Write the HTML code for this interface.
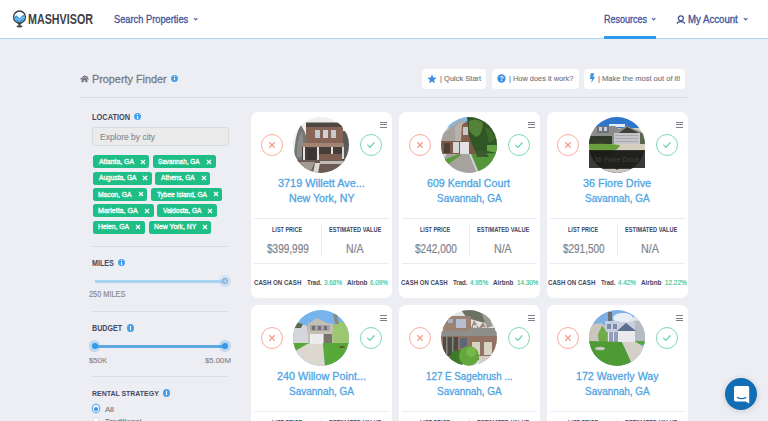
<!DOCTYPE html>
<html><head><meta charset="utf-8">
<style>
*{margin:0;padding:0;box-sizing:border-box}
html,body{width:768px;height:421px;overflow:hidden}
body{background:#edeef3;font-family:"Liberation Sans",sans-serif;position:relative}
.a{position:absolute;white-space:nowrap;line-height:1;transform-origin:0 0;-webkit-text-stroke:0.3px currentColor}
#hdr{position:absolute;left:0;top:0;width:768px;height:39px;background:#fff;border-bottom:1px solid #a9d6f7}
.chev{position:absolute;width:3.3px;height:3.3px;border-right:1.4px solid #46549a;border-bottom:1.4px solid #46549a;transform:rotate(45deg)}
.info{position:absolute;width:7.2px;height:7.2px;border-radius:50%;background:#4aa2e8;margin-top:-0.3px}
.info:after{content:"";position:absolute;left:3px;top:2.8px;width:1.2px;height:2.7px;background:#fff}
.info:before{content:"";position:absolute;left:3px;top:1.2px;width:1.2px;height:1px;background:#fff}
.div{position:absolute;height:1px;background:#dcdde2}
.btn{position:absolute;top:68.5px;height:20px;background:#fff;border-radius:4px}
.tag{position:absolute;height:13px;background:#1fbe87;border-radius:2.5px}
.tag svg{position:absolute;right:3.6px;top:3.6px}
.card{position:absolute;width:141px;height:186.5px;background:#fff;border-radius:7px;overflow:hidden}
.photo{position:absolute;left:42px;top:5px;width:56px;height:56px;border-radius:50%;overflow:hidden}
.xc{position:absolute;left:10.2px;top:22.3px;width:22px;height:22px;border-radius:50%;border:1px solid #f8ae9f}
.ck{position:absolute;left:109px;top:22.3px;width:22px;height:22px;border-radius:50%;border:1px solid #7dd9b8}
.ham{position:absolute;left:129px;top:10px;width:7px;height:6.5px;border-top:1px solid #7b7f88;border-bottom:1px solid #7b7f88}
.ham:after{content:"";position:absolute;left:0;top:1.8px;width:7px;height:1px;background:#7b7f88}
.cd{position:absolute;left:3px;width:135px;height:1px;background:#eaebee}
.vd{position:absolute;left:69.6px;top:113px;width:1px;height:31px;background:#eaebee}
</style></head><body>
<div id="hdr">
  <svg class="a" style="left:12px;top:9px" width="16" height="20" viewBox="0 0 16 20">
    <defs><clipPath id="lc"><circle cx="7.5" cy="8" r="5.2"/></clipPath></defs>
    <path d="M4.5 13 L7.5 17 L10.5 13 Z" fill="#3d4045"/>
    <ellipse cx="7.5" cy="17.4" rx="3" ry="1.1" fill="#3d4045"/>
    <circle cx="7.5" cy="8" r="5.9" fill="#fff" stroke="#3d4045" stroke-width="1.5"/>
    <g clip-path="url(#lc)">
      <path d="M1 9 L4.5 6.2 L7.5 9.2 L11 5.8 L14 7.5 L14 14 L1 14 Z" fill="#3a9de8"/>
      <path d="M2.5 11 L5 9.5 L7.5 11 L11 8.5 L13 9.5" stroke="#a9d5f6" stroke-width="0.9" fill="none"/>
    </g>
  </svg>
  <div class="chev" style="left:193.5px;top:17px"></div>
  <div class="chev" style="left:651.7px;top:17px"></div>
  <div class="a" style="left:604px;top:36px;width:51.5px;height:3px;background:#2f9bea"></div>
  <svg class="a" style="left:676px;top:14.5px" width="10" height="10" viewBox="0 0 10 10">
    <circle cx="4.9" cy="3.3" r="2.5" stroke="#46549a" stroke-width="1.25" fill="none"/>
    <path d="M1.2 8.8 C1.2 5.9 8.6 5.9 8.6 8.8" stroke="#46549a" stroke-width="1.25" fill="none"/>
  </svg>
  <div class="chev" style="left:743.5px;top:17px"></div>
</div>
<div class="a" style="left:28.15px;top:11.48px;font-size:15.14px;font-weight:bold;color:#3f4144;transform:scaleX(0.710);-webkit-text-stroke:0;">MASHVISOR</div>
<div class="a" style="left:114.24px;top:14.48px;font-size:10.72px;font-weight:normal;color:#46549a;transform:scaleX(0.865);-webkit-text-stroke:0.32px currentColor;">Search Properties</div>
<div class="a" style="left:603.78px;top:15.00px;font-size:10.00px;font-weight:normal;color:#46549a;transform:scaleX(0.901);-webkit-text-stroke:0.32px currentColor;">Resources</div>
<div class="a" style="left:688.03px;top:15.00px;font-size:10.00px;font-weight:normal;color:#46549a;transform:scaleX(0.963);-webkit-text-stroke:0.32px currentColor;">My Account</div>

<svg class="a" style="left:80px;top:75px" width="9" height="8" viewBox="0 0 9 8">
  <path d="M0.4 4.4 L4.5 1 L8.6 4.4" stroke="#6e727e" stroke-width="1.2" fill="none"/>
  <rect x="6.3" y="1" width="1.2" height="2.4" fill="#6e727e"/>
  <path d="M1.6 4.6 L4.5 2.3 L7.4 4.6 L7.4 7.2 L5.3 7.2 L5.3 5.3 L3.7 5.3 L3.7 7.2 L1.6 7.2 Z" fill="#6e727e"/>
</svg>
<div class="a" style="left:92.33px;top:73.64px;font-size:11.59px;font-weight:normal;color:#777b86;transform:scaleX(0.935);">Property Finder</div>
<div class="info" style="left:171.2px;top:75.1px"></div>
<div class="div" style="left:80px;top:97px;width:608px"></div>

<div class="btn" style="left:421.6px;width:64.6px">
  <svg class="a" style="left:5px;top:5px" width="10" height="10" viewBox="0 0 10 10"><path d="M5 0.3 L6.3 3.5 L9.7 3.7 L7.1 5.9 L7.9 9.3 L5 7.4 L2.1 9.3 L2.9 5.9 L0.3 3.7 L3.7 3.5 Z" fill="#3d8fe0"/></svg>
</div>
<div class="btn" style="left:492px;width:86.5px">
  <svg class="a" style="left:4.8px;top:5.5px" width="9" height="9" viewBox="0 0 10 10"><circle cx="5" cy="5" r="4.6" fill="#3d8fe0"/><text x="5" y="8" font-size="7.5" font-weight="bold" fill="#fff" text-anchor="middle" font-family="Liberation Sans">?</text></svg>
</div>
<div class="btn" style="left:584.2px;width:101px">
  <svg class="a" style="left:5px;top:4.5px" width="7" height="11" viewBox="0 0 8 12"><path d="M2 0 L6 0 L4.5 4 L7 4 L2.5 11.5 L3.5 6.5 L1 6.5 Z" fill="#3d8fe0"/></svg>
</div>
<div class="a" style="left:439.82px;top:75.40px;font-size:8.12px;font-weight:normal;color:#767a84;transform:scaleX(0.926);-webkit-text-stroke:0.15px currentColor;">| Quick Start</div>
<div class="a" style="left:509.13px;top:75.40px;font-size:8.12px;font-weight:normal;color:#767a84;transform:scaleX(0.912);-webkit-text-stroke:0.15px currentColor;">| How does it work?</div>
<div class="a" style="left:598.12px;top:75.40px;font-size:8.12px;font-weight:normal;color:#767a84;transform:scaleX(0.930);-webkit-text-stroke:0.15px currentColor;">| Make the most out of it!</div>

<div class="a" style="left:91.8px;top:126.5px;width:136.8px;height:19.2px;background:#ebebec;border:1px solid #d9dadd;border-radius:3px"></div>
<div class="info" style="left:134.2px;top:113.6px"></div>
<div class="tag" style="left:93.2px;top:155.2px;width:56.2px"><svg width="6" height="6" viewBox="0 0 6 6"><path d="M1 1 L5 5 M5 1 L1 5" stroke="#fff" stroke-width="1.25"/></svg></div>
<div class="a" style="left:98.80px;top:159.01px;font-size:6.81px;font-weight:normal;color:#fff;transform:scaleX(1.006);">Atlanta, GA</div>
<div class="tag" style="left:153.2px;top:155.2px;width:62.4px"><svg width="6" height="6" viewBox="0 0 6 6"><path d="M1 1 L5 5 M5 1 L1 5" stroke="#fff" stroke-width="1.25"/></svg></div>
<div class="a" style="left:158.48px;top:159.01px;font-size:6.81px;font-weight:normal;color:#fff;transform:scaleX(0.938);">Savannah, GA</div>
<div class="tag" style="left:93.2px;top:171.5px;width:58.8px"><svg width="6" height="6" viewBox="0 0 6 6"><path d="M1 1 L5 5 M5 1 L1 5" stroke="#fff" stroke-width="1.25"/></svg></div>
<div class="a" style="left:98.80px;top:175.31px;font-size:6.81px;font-weight:normal;color:#fff;transform:scaleX(0.974);">Augusta, GA</div>
<div class="tag" style="left:155.3px;top:171.5px;width:54.9px"><svg width="6" height="6" viewBox="0 0 6 6"><path d="M1 1 L5 5 M5 1 L1 5" stroke="#fff" stroke-width="1.25"/></svg></div>
<div class="a" style="left:160.90px;top:175.31px;font-size:6.81px;font-weight:normal;color:#fff;transform:scaleX(0.968);">Athens, GA</div>
<div class="tag" style="left:93.2px;top:187.8px;width:54.2px"><svg width="6" height="6" viewBox="0 0 6 6"><path d="M1 1 L5 5 M5 1 L1 5" stroke="#fff" stroke-width="1.25"/></svg></div>
<div class="a" style="left:98.26px;top:191.61px;font-size:6.81px;font-weight:normal;color:#fff;transform:scaleX(0.985);">Macon, GA</div>
<div class="tag" style="left:151.2px;top:187.8px;width:71.0px"><svg width="6" height="6" viewBox="0 0 6 6"><path d="M1 1 L5 5 M5 1 L1 5" stroke="#fff" stroke-width="1.25"/></svg></div>
<div class="a" style="left:156.67px;top:191.61px;font-size:6.81px;font-weight:normal;color:#fff;transform:scaleX(0.956);">Tybee Island, GA</div>
<div class="tag" style="left:93.2px;top:204.2px;width:60.4px"><svg width="6" height="6" viewBox="0 0 6 6"><path d="M1 1 L5 5 M5 1 L1 5" stroke="#fff" stroke-width="1.25"/></svg></div>
<div class="a" style="left:98.23px;top:208.01px;font-size:6.81px;font-weight:normal;color:#fff;transform:scaleX(1.041);">Marietta, GA</div>
<div class="tag" style="left:157.2px;top:204.2px;width:59.6px"><svg width="6" height="6" viewBox="0 0 6 6"><path d="M1 1 L5 5 M5 1 L1 5" stroke="#fff" stroke-width="1.25"/></svg></div>
<div class="a" style="left:162.73px;top:208.01px;font-size:6.81px;font-weight:normal;color:#fff;transform:scaleX(0.972);">Valdosta, GA</div>
<div class="tag" style="left:93.2px;top:220.5px;width:51.6px"><svg width="6" height="6" viewBox="0 0 6 6"><path d="M1 1 L5 5 M5 1 L1 5" stroke="#fff" stroke-width="1.25"/></svg></div>
<div class="a" style="left:98.26px;top:224.31px;font-size:6.81px;font-weight:normal;color:#fff;transform:scaleX(0.985);">Helen, GA</div>
<div class="tag" style="left:148.5px;top:220.5px;width:62.8px"><svg width="6" height="6" viewBox="0 0 6 6"><path d="M1 1 L5 5 M5 1 L1 5" stroke="#fff" stroke-width="1.25"/></svg></div>
<div class="a" style="left:153.55px;top:224.31px;font-size:6.81px;font-weight:normal;color:#fff;transform:scaleX(1.008);">New York, NY</div>
<div class="div" style="left:91.8px;top:246px;width:136.2px"></div>
<div class="info" style="left:118px;top:259.5px"></div>
<div class="a" style="left:95px;top:280px;width:130px;height:2.7px;background:#a8d2f2"></div>
<div class="a" style="left:219.4px;top:275.4px;width:11.6px;height:11.6px;border-radius:50%;background:rgba(150,200,240,0.35)"></div>
<div class="a" style="left:222.3px;top:278.3px;width:5.8px;height:5.8px;border-radius:50%;background:#a6d0f0;border:1px solid #809ec6"></div>
<div class="div" style="left:91.8px;top:311px;width:136.2px"></div>
<div class="info" style="left:127px;top:324.7px"></div>
<div class="a" style="left:95px;top:345px;width:130px;height:2.6px;background:#5ea9e4"></div>
<div class="a" style="left:88.9px;top:340.4px;width:11.6px;height:11.6px;border-radius:50%;background:rgba(80,165,232,0.3)"></div>
<div class="a" style="left:91.8px;top:343.3px;width:5.8px;height:5.8px;border-radius:50%;background:#3399e6"></div>
<div class="a" style="left:219px;top:340.4px;width:11.6px;height:11.6px;border-radius:50%;background:rgba(80,165,232,0.3)"></div>
<div class="a" style="left:221.9px;top:343.3px;width:5.8px;height:5.8px;border-radius:50%;background:#3399e6"></div>
<div class="div" style="left:91.8px;top:376px;width:136.2px"></div>
<div class="info" style="left:162.8px;top:389.7px"></div>
<div class="a" style="left:91.5px;top:404.4px;width:8.6px;height:8.6px;border-radius:50%;border:1px solid #5aa8ea;background:#fff;box-shadow:0 0 0 1px rgba(74,159,230,0.2)"></div>
<div class="a" style="left:93.6px;top:406.5px;width:4.4px;height:4.4px;border-radius:50%;background:#3d8fe0"></div>
<div class="a" style="left:91.5px;top:416.5px;width:8.6px;height:8.6px;border-radius:50%;border:1px solid #d8d8dc;background:#fff"></div>
<div class="a" style="left:92.28px;top:112.96px;font-size:8.99px;font-weight:bold;color:#434862;transform:scaleX(0.826);-webkit-text-stroke:0;">LOCATION</div>
<div class="a" style="left:99.82px;top:132.39px;font-size:9.42px;font-weight:normal;color:#8a8c92;transform:scaleX(0.901);-webkit-text-stroke:0.15px currentColor;">Explore by city</div>
<div class="a" style="left:92.30px;top:259.21px;font-size:8.70px;font-weight:bold;color:#434862;transform:scaleX(0.823);-webkit-text-stroke:0;">MILES</div>
<div class="a" style="left:88.93px;top:291.08px;font-size:8.26px;font-weight:normal;color:#858891;transform:scaleX(0.891);-webkit-text-stroke:0.15px currentColor;">250 MILES</div>
<div class="a" style="left:92.20px;top:324.22px;font-size:9.28px;font-weight:bold;color:#434862;transform:scaleX(0.768);-webkit-text-stroke:0;">BUDGET</div>
<div class="a" style="left:89.02px;top:356.62px;font-size:7.97px;font-weight:normal;color:#858891;transform:scaleX(0.972);-webkit-text-stroke:0.15px currentColor;">$50K</div>
<div class="a" style="left:205.42px;top:356.62px;font-size:7.97px;font-weight:normal;color:#858891;transform:scaleX(0.972);-webkit-text-stroke:0.15px currentColor;">$5.00M</div>
<div class="a" style="left:92.21px;top:390.22px;font-size:7.97px;font-weight:bold;color:#434862;transform:scaleX(0.872);-webkit-text-stroke:0;">RENTAL STRATEGY</div>
<div class="a" style="left:104.70px;top:405.87px;font-size:7.68px;font-weight:normal;color:#737782;transform:scaleX(1.042);-webkit-text-stroke:0.15px currentColor;">All</div>
<div class="a" style="left:104.54px;top:417.67px;font-size:7.68px;font-weight:normal;color:#737782;transform:scaleX(1.024);-webkit-text-stroke:0.15px currentColor;">Traditional</div>

<div class="card" style="left:251px;top:111.5px">
  <div class="photo"><svg width="56" height="56" viewBox="0 0 56 56"><rect width="56" height="56" fill="#efeeec"/>
<path d="M1 40 Q2 16 8 8 Q12 14 14 22 L14 46 L1 46 Z" fill="#727574"/>
<path d="M4 30 Q6 18 9 14 Q11 22 10 40 L4 40 Z" fill="#8a8c8a"/>
<rect x="13" y="6" width="37" height="21" fill="#866456"/>
<rect x="13" y="5.5" width="37" height="4.5" fill="#4d4642"/>
<rect x="22" y="13" width="5" height="8" fill="#c6c8cc"/><rect x="30" y="13" width="5" height="8" fill="#cfd0d2"/><rect x="38" y="13" width="5" height="8" fill="#c6c8cc"/>
<rect x="50" y="14" width="6" height="30" fill="#5a5a5a"/>
<rect x="8" y="26" width="43" height="4" fill="#a28472"/>
<rect x="9" y="30" width="42" height="14" fill="#463c38"/>
<rect x="15" y="32" width="8" height="12" fill="#3a3634"/>
<rect x="10" y="30" width="2" height="14" fill="#e6e2de"/><rect x="24" y="30" width="2" height="14" fill="#e6e2de"/><rect x="38" y="30" width="2" height="14" fill="#e6e2de"/><rect x="49" y="30" width="2" height="12" fill="#dcd8d4"/>
<rect x="26" y="37" width="23" height="7" fill="#7e5c50"/>
<rect x="0" y="43" width="56" height="13" fill="#6a5a52"/>
<path d="M6 45 L22 45 L17 56 L0 56 Z" fill="#a39a92"/>
<rect x="27" y="44" width="24" height="3" fill="#c0bab4"/>
<path d="M22 46 L27 46 L25 56 L20 56 Z" fill="#dcd8d4"/>
</svg>
</div>
  <div class="xc"><svg width="20" height="20" viewBox="0 0 20 20"><path d="M7.3 7.3 L12.7 12.7 M12.7 7.3 L7.3 12.7" stroke="#f59c8a" stroke-width="1.3"/></svg></div>
  <div class="ck"><svg width="20" height="20" viewBox="0 0 20 20"><path d="M6.3 9.9 L9 12.4 L13.4 7.4" stroke="#5ccfa8" stroke-width="1.2" fill="none"/></svg></div>
  <div class="ham"></div>
  <div class="cd" style="top:106.6px"></div>
  <div class="vd"></div>
  <div class="cd" style="top:151.7px"></div>
</div>

<div class="a" style="left:278.16px;top:178.26px;font-size:10.87px;font-weight:normal;color:#50a5e4;transform:scaleX(1.001);">3719 Willett Ave...</div>
<div class="a" style="left:288.65px;top:192.81px;font-size:10.58px;font-weight:normal;color:#50a5e4;transform:scaleX(1.003);">New York, NY</div>
<div class="a" style="left:272.21px;top:226.32px;font-size:7.39px;font-weight:bold;color:#434862;transform:scaleX(0.745);-webkit-text-stroke:0;">LIST PRICE</div>
<div class="a" style="left:328.61px;top:226.32px;font-size:7.39px;font-weight:bold;color:#434862;transform:scaleX(0.763);-webkit-text-stroke:0;">ESTIMATED VALUE</div>
<div class="a" style="left:266.90px;top:243.13px;font-size:12.32px;font-weight:normal;color:#80838b;transform:scaleX(0.814);-webkit-text-stroke:0.2px currentColor;">$399,999</div>
<div class="a" style="left:345.65px;top:243.13px;font-size:12.32px;font-weight:normal;color:#80838b;transform:scaleX(0.858);-webkit-text-stroke:0.2px currentColor;">N/A</div>
<div class="a" style="left:254.25px;top:279.99px;font-size:6.96px;font-weight:bold;color:#434862;transform:scaleX(0.881);-webkit-text-stroke:0;">CASH ON CASH</div>
<div class="a" style="left:306.74px;top:279.99px;font-size:6.96px;font-weight:bold;color:#434862;transform:scaleX(0.884);-webkit-text-stroke:0;">Trad.</div>
<div class="a" style="left:324.14px;top:279.99px;font-size:6.96px;font-weight:normal;color:#38c495;transform:scaleX(0.917);-webkit-text-stroke:0.15px currentColor;">3.68%</div>
<div class="a" style="left:347.21px;top:279.99px;font-size:6.96px;font-weight:bold;color:#434862;transform:scaleX(0.908);-webkit-text-stroke:0;">Airbnb</div>
<div class="a" style="left:370.39px;top:279.99px;font-size:6.96px;font-weight:normal;color:#38c495;transform:scaleX(0.904);-webkit-text-stroke:0.15px currentColor;">6.09%</div>
<div class="card" style="left:399px;top:111.5px">
  <div class="photo"><svg width="56" height="56" viewBox="0 0 56 56"><rect width="56" height="56" fill="#cfd6de"/>
<path d="M6 0 L30 0 L26 10 L8 14 Z" fill="#8ab8e2"/>
<path d="M0 18 L10 10 L20 3 L26 8 L30 6 L34 14 L34 37 L0 37 Z" fill="#a8a29c"/>
<path d="M20 4 L26 10 L26 24 L14 24 L14 10 Z" fill="#b8b2aa"/>
<path d="M21 8 L26 4 L30 10 L30 24 L20 24 Z" fill="#8a5e4c"/>
<rect x="22" y="10" width="5" height="8" fill="#c8c8cc"/>
<rect x="0" y="24" width="36" height="13" fill="#7c5a4a"/>
<rect x="12" y="25" width="6" height="11" fill="#d6d6d8"/>
<rect x="19" y="25" width="9" height="12" fill="#e2e2e4"/>
<rect x="3" y="26" width="6" height="10" fill="#4e4038"/>
<path d="M26 0 L56 0 L56 38 L46 40 L34 34 L28 20 Z" fill="#2f5624"/>
<path d="M28 4 Q36 0 42 6 Q42 16 36 20 Q30 18 28 12 Z" fill="#52823a"/><path d="M44 10 Q52 12 54 22 L48 26 Z" fill="#3e6a2c"/>
<path d="M46 28 L56 28 L56 36 L46 34 Z" fill="#62a444"/>
<path d="M6 37 L28 37 L36 56 L8 56 L0 46 Z" fill="#a6a29e"/>
<path d="M0 44 L18 37 L20 38 L6 48 L0 50 Z" fill="#5a9a38"/>
<path d="M30 37 L56 36 L56 56 L38 56 Z" fill="#56963a"/>
<path d="M34 34 L44 34 L48 40 L36 40 Z" fill="#3c5a30"/>
</svg>
</div>
  <div class="xc"><svg width="20" height="20" viewBox="0 0 20 20"><path d="M7.3 7.3 L12.7 12.7 M12.7 7.3 L7.3 12.7" stroke="#f59c8a" stroke-width="1.3"/></svg></div>
  <div class="ck"><svg width="20" height="20" viewBox="0 0 20 20"><path d="M6.3 9.9 L9 12.4 L13.4 7.4" stroke="#5ccfa8" stroke-width="1.2" fill="none"/></svg></div>
  <div class="ham"></div>
  <div class="cd" style="top:106.6px"></div>
  <div class="vd"></div>
  <div class="cd" style="top:151.7px"></div>
</div>

<div class="a" style="left:427.27px;top:178.26px;font-size:10.87px;font-weight:normal;color:#50a5e4;transform:scaleX(0.981);">609 Kendal Court</div>
<div class="a" style="left:436.50px;top:192.81px;font-size:10.58px;font-weight:normal;color:#50a5e4;transform:scaleX(0.941);">Savannah, GA</div>
<div class="a" style="left:420.21px;top:226.32px;font-size:7.39px;font-weight:bold;color:#434862;transform:scaleX(0.745);-webkit-text-stroke:0;">LIST PRICE</div>
<div class="a" style="left:476.61px;top:226.32px;font-size:7.39px;font-weight:bold;color:#434862;transform:scaleX(0.763);-webkit-text-stroke:0;">ESTIMATED VALUE</div>
<div class="a" style="left:414.70px;top:243.13px;font-size:12.32px;font-weight:normal;color:#80838b;transform:scaleX(0.816);-webkit-text-stroke:0.2px currentColor;">$242,000</div>
<div class="a" style="left:493.65px;top:243.13px;font-size:12.32px;font-weight:normal;color:#80838b;transform:scaleX(0.858);-webkit-text-stroke:0.2px currentColor;">N/A</div>
<div class="a" style="left:400.76px;top:279.99px;font-size:6.96px;font-weight:bold;color:#434862;transform:scaleX(0.866);-webkit-text-stroke:0;">CASH ON CASH</div>
<div class="a" style="left:452.94px;top:279.99px;font-size:6.96px;font-weight:bold;color:#434862;transform:scaleX(0.871);-webkit-text-stroke:0;">Trad.</div>
<div class="a" style="left:470.17px;top:279.99px;font-size:6.96px;font-weight:normal;color:#38c495;transform:scaleX(0.915);-webkit-text-stroke:0.15px currentColor;">4.95%</div>
<div class="a" style="left:493.31px;top:279.99px;font-size:6.96px;font-weight:bold;color:#434862;transform:scaleX(0.913);-webkit-text-stroke:0;">Airbnb</div>
<div class="a" style="left:516.69px;top:279.99px;font-size:6.96px;font-weight:normal;color:#38c495;transform:scaleX(0.912);-webkit-text-stroke:0.15px currentColor;">14.30%</div>
<div class="card" style="left:547px;top:111.5px">
  <div class="photo"><svg width="56" height="56" viewBox="0 0 56 56"><rect width="56" height="56" fill="#d4cfc4"/>
<rect x="0" y="0" width="56" height="11" fill="#2e76cc"/>
<rect x="20" y="7" width="16" height="3" fill="#e4eaf0"/>
<path d="M0 12 L4 9 L26 9 L30 12 L38 9 L50 14 L56 16 L56 28 L0 28 Z" fill="#8c8c8a"/>
<rect x="8" y="9" width="12" height="7" fill="#6a7080"/>
<rect x="10" y="10" width="3" height="4" fill="#c8ccd4"/><rect x="15" y="10" width="3" height="4" fill="#c8ccd4"/>
<path d="M30 16 L38 10 L50 16 Z" fill="#3e4038"/>
<rect x="25" y="16" width="26" height="12" fill="#c6c6ca"/>
<rect x="26" y="18" width="23" height="1" fill="#a8a8ac"/><rect x="26" y="21" width="23" height="1" fill="#a8a8ac"/><rect x="26" y="24" width="23" height="1" fill="#a8a8ac"/>
<rect x="0" y="19" width="23" height="10" fill="#2f3a28"/>
<rect x="51" y="16" width="5" height="12" fill="#5a6650"/>
<rect x="0" y="27" width="56" height="7" fill="#d4cebe"/>
<path d="M0 27 Q18 26 31 28 Q30 33 22 34 L0 34 Z" fill="#6aa03c"/>
<rect x="0" y="34" width="56" height="22" fill="#3c3b36"/>
<path d="M0 34 L30 34 L10 50 L0 50 Z" fill="#1e2412"/>
<rect x="0" y="52" width="56" height="4" fill="#cac6be"/>
</svg>
</div>
  <div class="xc"><svg width="20" height="20" viewBox="0 0 20 20"><path d="M7.3 7.3 L12.7 12.7 M12.7 7.3 L7.3 12.7" stroke="#f59c8a" stroke-width="1.3"/></svg></div>
  <div class="ck"><svg width="20" height="20" viewBox="0 0 20 20"><path d="M6.3 9.9 L9 12.4 L13.4 7.4" stroke="#5ccfa8" stroke-width="1.2" fill="none"/></svg></div>
  <div class="ham"></div>
  <div class="cd" style="top:106.6px"></div>
  <div class="vd"></div>
  <div class="cd" style="top:151.7px"></div>
</div>

<div class="a" style="left:583.17px;top:178.26px;font-size:10.87px;font-weight:normal;color:#50a5e4;transform:scaleX(0.999);">36 Fiore Drive</div>
<div class="a" style="left:584.60px;top:192.81px;font-size:10.58px;font-weight:normal;color:#50a5e4;transform:scaleX(0.941);">Savannah, GA</div>
<div class="a" style="left:568.21px;top:226.32px;font-size:7.39px;font-weight:bold;color:#434862;transform:scaleX(0.745);-webkit-text-stroke:0;">LIST PRICE</div>
<div class="a" style="left:624.61px;top:226.32px;font-size:7.39px;font-weight:bold;color:#434862;transform:scaleX(0.763);-webkit-text-stroke:0;">ESTIMATED VALUE</div>
<div class="a" style="left:562.50px;top:243.13px;font-size:12.32px;font-weight:normal;color:#80838b;transform:scaleX(0.808);-webkit-text-stroke:0.2px currentColor;">$291,500</div>
<div class="a" style="left:641.34px;top:243.13px;font-size:12.32px;font-weight:normal;color:#80838b;transform:scaleX(0.873);-webkit-text-stroke:0.2px currentColor;">N/A</div>
<div class="a" style="left:548.45px;top:279.99px;font-size:6.96px;font-weight:bold;color:#434862;transform:scaleX(0.881);-webkit-text-stroke:0;">CASH ON CASH</div>
<div class="a" style="left:600.94px;top:279.99px;font-size:6.96px;font-weight:bold;color:#434862;transform:scaleX(0.871);-webkit-text-stroke:0;">Trad.</div>
<div class="a" style="left:618.27px;top:279.99px;font-size:6.96px;font-weight:normal;color:#38c495;transform:scaleX(0.910);-webkit-text-stroke:0.15px currentColor;">4.42%</div>
<div class="a" style="left:641.21px;top:279.99px;font-size:6.96px;font-weight:bold;color:#434862;transform:scaleX(0.913);-webkit-text-stroke:0;">Airbnb</div>
<div class="a" style="left:664.59px;top:279.99px;font-size:6.96px;font-weight:normal;color:#38c495;transform:scaleX(0.916);-webkit-text-stroke:0.15px currentColor;">12.22%</div>
<div class="card" style="left:251px;top:304.8px">
  <div class="photo"><svg width="56" height="56" viewBox="0 0 56 56"><rect width="56" height="56" fill="#78b4ec"/>
<path d="M0 14 L4 12 L14 16 L16 34 L0 34 Z" fill="#d4d6dc"/>
<path d="M2 12 L10 14 L8 18 L2 18 Z" fill="#5a6a50"/>
<path d="M15 14 L24 8 L34 13 L40 14 L40 34 L15 34 Z" fill="#c4bfb4"/>
<rect x="17" y="15" width="20" height="6" fill="#a8a49c"/>
<rect x="19" y="16" width="3" height="4" fill="#6a7080"/><rect x="25" y="16" width="3" height="4" fill="#6a7080"/><rect x="31" y="16" width="3" height="4" fill="#6a7080"/>
<rect x="17" y="24" width="13" height="10" fill="#ececec"/>
<rect x="31" y="24" width="8" height="10" fill="#7a7468"/>
<path d="M42 12 Q52 10 56 18 L56 34 L40 34 Q38 22 42 12 Z" fill="#9cc670"/><path d="M40 4 L44 4 L46 14 L42 14 Z" fill="#8a8a84"/>

<path d="M6 34 L30 34 L32 56 L0 56 L0 48 Z" fill="#dcd8d0"/>
<path d="M0 33 L16 33 L4 40 L0 42 Z" fill="#5aa63a"/>
<path d="M30 33 L56 33 L56 56 L32 56 Z" fill="#58a83a"/>
<ellipse cx="49" cy="37" rx="3" ry="1" fill="#6a4a38"/>
</svg>
</div>
  <div class="xc"><svg width="20" height="20" viewBox="0 0 20 20"><path d="M7.3 7.3 L12.7 12.7 M12.7 7.3 L7.3 12.7" stroke="#f59c8a" stroke-width="1.3"/></svg></div>
  <div class="ck"><svg width="20" height="20" viewBox="0 0 20 20"><path d="M6.3 9.9 L9 12.4 L13.4 7.4" stroke="#5ccfa8" stroke-width="1.2" fill="none"/></svg></div>
  <div class="ham"></div>
  <div class="cd" style="top:106.6px"></div>
  <div class="vd"></div>
  <div class="cd" style="top:151.7px"></div>
</div>

<div class="a" style="left:277.16px;top:370.86px;font-size:10.87px;font-weight:normal;color:#50a5e4;transform:scaleX(0.996);">240 Willow Point...</div>
<div class="a" style="left:288.50px;top:386.11px;font-size:10.58px;font-weight:normal;color:#50a5e4;transform:scaleX(0.945);">Savannah, GA</div>
<div class="a" style="left:272.21px;top:418.72px;font-size:7.39px;font-weight:bold;color:#434862;transform:scaleX(0.745);-webkit-text-stroke:0;">LIST PRICE</div>
<div class="a" style="left:328.61px;top:418.72px;font-size:7.39px;font-weight:bold;color:#434862;transform:scaleX(0.763);-webkit-text-stroke:0;">ESTIMATED VALUE</div>
<div class="card" style="left:399px;top:304.8px">
  <div class="photo"><svg width="56" height="56" viewBox="0 0 56 56"><rect width="56" height="56" fill="#e4e4e2"/>
<path d="M20 0 L48 0 L50 14 L40 12 L26 8 Z" fill="#6a7262"/>
<path d="M40 2 Q48 6 52 16 L46 18 Z" fill="#9a9c94"/>
<rect x="2" y="6" width="28" height="17" fill="#9c8272"/>
<rect x="15" y="9" width="10" height="9" fill="#b6bfd0"/>
<rect x="7" y="9" width="5" height="4" fill="#aab0bc"/>
<path d="M28 23 L33 10 L38 18 L42 12 L48 23 Z" fill="#a88a78"/>
<rect x="32" y="15" width="4" height="7" fill="#d2d2d4"/><rect x="41" y="17" width="4" height="6" fill="#cacacc"/>
<rect x="30" y="18" width="24" height="4" fill="#8c8e8e"/>
<rect x="0" y="21" width="56" height="6" fill="#8e8e8a"/>
<rect x="0" y="26" width="56" height="24" fill="#927262"/>
<rect x="2" y="27" width="15" height="19" fill="#4c4a44"/>
<rect x="5" y="27" width="1.5" height="19" fill="#8a8680"/><rect x="11" y="27" width="1.5" height="19" fill="#8a8680"/>
<rect x="19" y="28" width="7" height="10" fill="#5e6676"/>
<rect x="31" y="32" width="8" height="13" fill="#d8d4c4"/>
<rect x="43" y="32" width="8" height="13" fill="#d8d4c4"/>
<rect x="38" y="46" width="18" height="10" fill="#d2cec6"/>
<ellipse cx="17" cy="48" rx="8" ry="8" fill="#3e7a2a"/>
<ellipse cx="28" cy="46" rx="10" ry="10" fill="#62a83c"/>
<ellipse cx="30" cy="42" rx="5" ry="5" fill="#78b84a"/>
</svg>
</div>
  <div class="xc"><svg width="20" height="20" viewBox="0 0 20 20"><path d="M7.3 7.3 L12.7 12.7 M12.7 7.3 L7.3 12.7" stroke="#f59c8a" stroke-width="1.3"/></svg></div>
  <div class="ck"><svg width="20" height="20" viewBox="0 0 20 20"><path d="M6.3 9.9 L9 12.4 L13.4 7.4" stroke="#5ccfa8" stroke-width="1.2" fill="none"/></svg></div>
  <div class="ham"></div>
  <div class="cd" style="top:106.6px"></div>
  <div class="vd"></div>
  <div class="cd" style="top:151.7px"></div>
</div>

<div class="a" style="left:426.22px;top:370.86px;font-size:10.87px;font-weight:normal;color:#50a5e4;transform:scaleX(0.902);">127 E Sagebrush ...</div>
<div class="a" style="left:436.50px;top:386.11px;font-size:10.58px;font-weight:normal;color:#50a5e4;transform:scaleX(0.941);">Savannah, GA</div>
<div class="a" style="left:420.21px;top:418.72px;font-size:7.39px;font-weight:bold;color:#434862;transform:scaleX(0.745);-webkit-text-stroke:0;">LIST PRICE</div>
<div class="a" style="left:476.61px;top:418.72px;font-size:7.39px;font-weight:bold;color:#434862;transform:scaleX(0.763);-webkit-text-stroke:0;">ESTIMATED VALUE</div>
<div class="card" style="left:547px;top:304.8px">
  <div class="photo"><svg width="56" height="56" viewBox="0 0 56 56"><rect width="56" height="56" fill="#7eb0e6"/>
<ellipse cx="34" cy="8" rx="10" ry="5" fill="#e8eef6"/>
<ellipse cx="47" cy="12" rx="7" ry="5" fill="#dfe6ee"/>
<rect x="19" y="2" width="4" height="11" fill="#6a7070"/>
<path d="M0 15 L12 13 L16 16 L16 32 L0 32 Z" fill="#cac6be"/>
<path d="M42 12 Q50 8 56 14 L56 31 L42 31 Z" fill="#b6bac2"/>
<rect x="16" y="11" width="14" height="12" fill="#c4cede"/>
<rect x="18" y="14" width="4" height="5" fill="#7c8ca8"/><rect x="24" y="14" width="4" height="5" fill="#7c8ca8"/>
<rect x="28" y="12" width="18" height="8" fill="#c8d0de"/>
<path d="M28 21 L37 13 L47 21 Z" fill="#5e6e90"/>
<rect x="29" y="21" width="17" height="12" fill="#e8eaee"/>
<rect x="17" y="22" width="12" height="10" fill="#909eb8"/>
<rect x="19" y="22" width="1" height="10" fill="#e8e8ec"/><rect x="24" y="22" width="1" height="10" fill="#e8e8ec"/>
<path d="M13 16 Q19 20 18 30 Q16 36 13 36 Q9 32 9 24 Z" fill="#72aa4a"/>
<path d="M0 31 L33 32 L44 56 L0 56 Z" fill="#4e9a34"/>
<path d="M46 31 L56 31 L56 35 L48 34 Z" fill="#5aa43c"/>
<path d="M33 32 L47 32 L56 38 L56 56 L44 56 Z" fill="#d4d0c6"/>
<ellipse cx="11" cy="38.5" rx="5" ry="1.8" fill="#c8c8c4"/>
</svg>
</div>
  <div class="xc"><svg width="20" height="20" viewBox="0 0 20 20"><path d="M7.3 7.3 L12.7 12.7 M12.7 7.3 L7.3 12.7" stroke="#f59c8a" stroke-width="1.3"/></svg></div>
  <div class="ck"><svg width="20" height="20" viewBox="0 0 20 20"><path d="M6.3 9.9 L9 12.4 L13.4 7.4" stroke="#5ccfa8" stroke-width="1.2" fill="none"/></svg></div>
  <div class="ham"></div>
  <div class="cd" style="top:106.6px"></div>
  <div class="vd"></div>
  <div class="cd" style="top:151.7px"></div>
</div>

<div class="a" style="left:575.95px;top:370.86px;font-size:10.87px;font-weight:normal;color:#50a5e4;transform:scaleX(0.979);">172 Waverly Way</div>
<div class="a" style="left:584.60px;top:386.11px;font-size:10.58px;font-weight:normal;color:#50a5e4;transform:scaleX(0.941);">Savannah, GA</div>
<div class="a" style="left:568.21px;top:418.72px;font-size:7.39px;font-weight:bold;color:#434862;transform:scaleX(0.745);-webkit-text-stroke:0;">LIST PRICE</div>
<div class="a" style="left:624.61px;top:418.72px;font-size:7.39px;font-weight:bold;color:#434862;transform:scaleX(0.763);-webkit-text-stroke:0;">ESTIMATED VALUE</div>
<div class="a" style="left:589.3px;top:150.2px;width:55.3px;height:17.8px;background:rgba(30,29,24,0.87)"></div>
<div class="a" style="left:615px;top:167.9px;width:0;height:0;border-left:2.5px solid transparent;border-right:2.5px solid transparent;border-top:2.5px solid rgba(30,29,24,0.87)"></div>
<div class="a" style="left:594.01px;top:156.30px;font-size:8.12px;font-weight:normal;color:#42413c;transform:scaleX(0.890);-webkit-text-stroke:0;">36 Fiore Drive</div>

<div class="a" style="left:725px;top:378px;width:32px;height:32px;border-radius:50%;background:#116eb5;box-shadow:0 1px 6px rgba(0,0,0,0.15)">
  <svg class="a" style="left:8.9px;top:7.8px" width="16" height="18" viewBox="0 0 16 18">
    <path d="M1.5 0 H13.8 Q15.2 0 15.2 1.5 V17.4 L11.6 15.4 H1.5 Q0 15.4 0 14 V1.5 Q0 0 1.5 0 Z" fill="#fff"/>
    <path d="M3 11.2 Q7.6 14.2 12.2 11.2" stroke="#116eb5" stroke-width="1.3" fill="none"/>
  </svg>
</div>
</body></html>
